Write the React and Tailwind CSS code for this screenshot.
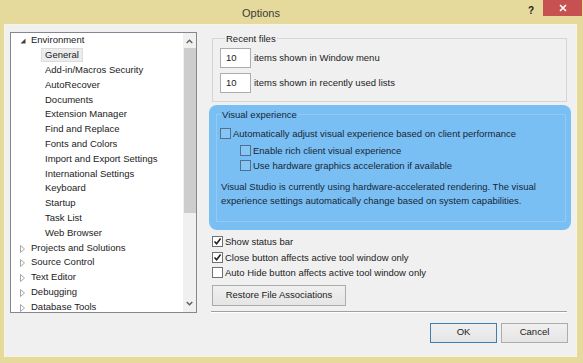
const tree = [
  { label: "Environment", level: 0, state: "open" },
  { label: "General", level: 1, selected: true },
  { label: "Add-in/Macros Security", level: 1 },
  { label: "AutoRecover", level: 1 },
  { label: "Documents", level: 1 },
  { label: "Extension Manager", level: 1 },
  { label: "Find and Replace", level: 1 },
  { label: "Fonts and Colors", level: 1 },
  { label: "Import and Export Settings", level: 1 },
  { label: "International Settings", level: 1 },
  { label: "Keyboard", level: 1 },
  { label: "Startup", level: 1 },
  { label: "Task List", level: 1 },
  { label: "Web Browser", level: 1 },
  { label: "Projects and Solutions", level: 0, state: "closed" },
  { label: "Source Control", level: 0, state: "closed" },
  { label: "Text Editor", level: 0, state: "closed" },
  { label: "Debugging", level: 0, state: "closed" },
  { label: "Database Tools", level: 0, state: "closed" },
];

const Expander = ({ state }) => {
  if (state === "open") {
    return (
      <svg width="6" height="6" viewBox="0 0 6 6" className="mt-[1px]">
        <polygon points="5.5,0.5 5.5,5.5 0.5,5.5" fill="#404040" />
      </svg>
    );
  }
  return (
    <svg width="5" height="8" viewBox="0 0 5 8" className="mt-[2px]">
      <polygon points="0.5,0.5 4.5,4 0.5,7.5" fill="none" stroke="#a6a6a6" strokeWidth="1" />
    </svg>
  );
};

const Chevron = ({ down }) => (
  <svg width="7" height="5" viewBox="0 0 7 5">
    <path
      d={down ? "M0.7 1 L3.5 3.8 L6.3 1" : "M0.7 4 L3.5 1.2 L6.3 4"}
      fill="none"
      stroke="#606060"
      strokeWidth="1.4"
    />
  </svg>
);

const Checkbox = ({ checked, blue }) => (
  <div
    className={
      "w-[11px] h-[11px] border flex items-center justify-center flex-shrink-0 " +
      (blue ? "border-[#50708e] bg-[#86c6f6]" : "border-[#707070] bg-white")
    }
  >
    {checked && (
      <svg width="9" height="9" viewBox="0 0 9 9">
        <path d="M1.5 4.5 L3.6 6.8 L7.6 1.6" fill="none" stroke="#222" strokeWidth="1.6" />
      </svg>
    )}
  </div>
);

const CheckRow = ({ checked, blue, children, className = "" }) => (
  <div className={"flex items-center gap-[2px] h-[15.5px] " + className}>
    <Checkbox checked={checked} blue={blue} />
    <span className="leading-none">{children}</span>
  </div>
);

const NumberBox = ({ value, label }) => (
  <div className="flex items-center gap-[3px]">
    <div className="w-[31px] h-[20px] bg-white border border-[#abadb3] flex items-center pl-[5px]">
      {value}
    </div>
    <span>{label}</span>
  </div>
);

const Button = ({ children, primary, className = "" }) => (
  <button
    className={
      "h-[20px] border bg-gradient-to-b from-[#f0f0f0] to-[#e5e5e5] flex items-center justify-center " +
      (primary ? "border-[#3c7fb1]" : "border-[#acacac]") +
      " " +
      className
    }
  >
    {children}
  </button>
);

export default function App() {
  return (
    <div className="w-[583px] h-[363px] bg-[#e5da9c] flex flex-col font-['Liberation_Sans',Arial,sans-serif] text-[9.5px] text-[#1b1b1b] overflow-hidden">
      {/* title bar */}
      <div className="h-[24px] flex items-start flex-shrink-0">
        <div className="flex-1 pl-[242px] pt-[5px] text-[11px] text-[#3a3a3a]">Options</div>
        <div className="text-[10px] font-bold text-[#222] mt-[3px] mr-[9px]">?</div>
        <div className="w-[39px] h-[16px] bg-[#c75050] flex items-center justify-center mr-[1px]">
          <svg width="8" height="8" viewBox="0 0 8 8">
            <path d="M1 1 L7 7 M7 1 L1 7" stroke="white" strokeWidth="1.6" />
          </svg>
        </div>
      </div>

      {/* client area */}
      <div className="ml-[4px] mr-[6px] h-[333px] bg-[#f0f0f0] border border-[#f8f4df] flex">
        {/* tree */}
        <div className="ml-[5px] mt-[7px] w-[187px] h-[281px] border border-[#828790] bg-white flex flex-shrink-0">
          <div className="flex-1 overflow-hidden">
            {tree.map((item) => (
              <div
                key={item.label}
                className={
                  "h-[14.8px] flex items-center " + (item.level === 0 ? "pl-[9px]" : "pl-[31px]")
                }
              >
                {item.level === 0 && (
                  <div className="w-[8px] flex items-center">
                    <Expander state={item.state} />
                  </div>
                )}
                <span
                  className={
                    "px-[3px] leading-[12px] " +
                    (item.selected ? "bg-[#ececec] border border-[#dcdcdc] -ml-[1px]" : "border border-transparent -ml-[1px]")
                  }
                >
                  {item.label}
                </span>
              </div>
            ))}
          </div>
          <div className="w-[13px] bg-[#f0f0f0] flex flex-col">
            <div className="h-[15px] flex items-center justify-center pt-[2px]">
              <Chevron />
            </div>
            <div className="ml-[1px] h-[165px] bg-[#cdcdcd]" />
            <div className="flex-1" />
            <div className="h-[15px] flex items-center justify-center pb-[2px]">
              <Chevron down />
            </div>
          </div>
        </div>

        {/* right panel */}
        <div className="ml-[15px] mr-[9px] flex-1 flex flex-col">
          <fieldset className="mt-[7px] border border-[#d5d5d5] pl-[7px] pt-[3px] pb-[8px] flex flex-col gap-[5px] h-[70px]">
            <legend className="ml-[5px] px-[1px] leading-[13px]">Recent files</legend>
            <NumberBox value="10" label="items shown in Window menu" />
            <NumberBox value="10" label="items shown in recently used lists" />
          </fieldset>

          <div className="-ml-[3px] -mr-[4px] mt-[3px] h-[125px] bg-[#7abff4] rounded-[8px] pl-[7px] pr-[5px] pt-[3px]">
            <fieldset className="border border-[#92caf5] h-[114px] pl-[3px] text-[#172636]">
              <legend className="ml-[1px] px-[1px] leading-[13px]">Visual experience</legend>
              <CheckRow blue className="mt-[5px]">
                Automatically adjust visual experience based on client performance
              </CheckRow>
              <div className="pl-[20px] mt-[1px]">
                <CheckRow blue>Enable rich client visual experience</CheckRow>
                <CheckRow blue>Use hardware graphics acceleration if available</CheckRow>
              </div>
              <p className="mt-[6px] pl-[1px] leading-[14px]">
                Visual Studio is currently using hardware-accelerated rendering. The visual
                <br />
                experience settings automatically change based on system capabilities.
              </p>
            </fieldset>
          </div>

          <div className="mt-[4px] flex flex-col">
            <CheckRow checked>Show status bar</CheckRow>
            <CheckRow checked>Close button affects active tool window only</CheckRow>
            <CheckRow>Auto Hide button affects active tool window only</CheckRow>
          </div>

          <Button className="mt-[4px] w-[134px] h-[21px]">Restore File Associations</Button>

          <div className="mt-[5px] -ml-[1px] border-t border-[#a0a0a0] border-b border-b-white" />

          <div className="mt-[10px] flex justify-end gap-[4px] -mr-[1px]">
            <Button primary className="w-[67px]">OK</Button>
            <Button className="w-[67px]">Cancel</Button>
          </div>
        </div>
      </div>
    </div>
  );
}
